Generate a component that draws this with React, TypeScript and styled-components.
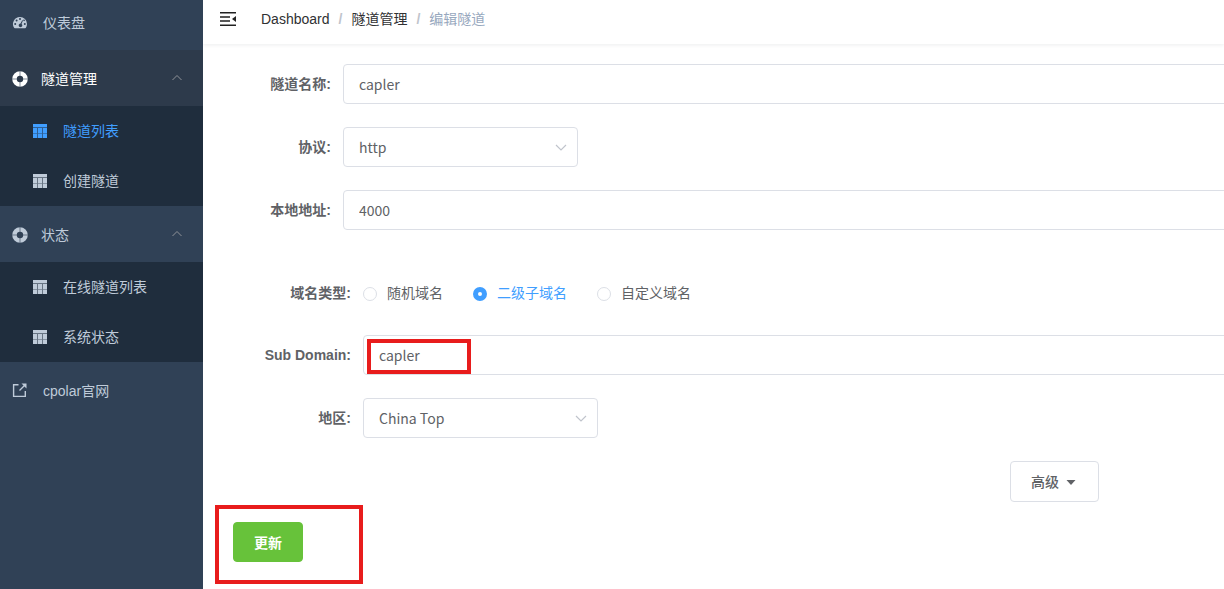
import React from "react";
import styled, { createGlobalStyle } from "styled-components";

const GlobalStyle = createGlobalStyle`
  *, *::before, *::after { box-sizing: border-box; }
  body {
    margin: 0;
    background: #fff;
    color: #606266;
    font: 14px/20px "Liberation Sans", "Noto Sans CJK SC", sans-serif;
  }
  a { color: inherit; text-decoration: none; }
`;

const fieldFont = `"Noto Sans CJK SC", sans-serif`;

const Shell = styled.div`
  display: flex;
  min-height: 100vh;
`;

const Sidebar = styled.nav`
  flex: 0 0 203px;
  background: #304156;
  color: #bfcbd9;
`;

const MenuLink = styled.a<{ $top?: boolean }>`
  display: flex;
  align-items: center;
  gap: 15px;
  height: ${(p) => (p.$top ? "50px" : "56px")};
  padding: ${(p) => (p.$top ? "0 20px 4px 12px" : "2px 20px 0 12px")};
`;

const GroupButton = styled.button<{ $active?: boolean }>`
  display: flex;
  align-items: center;
  gap: 13px;
  width: 100%;
  height: 56px;
  padding: 2px 20px 0 12px;
  border: 0;
  background: ${(p) => (p.$active ? "#2d3a4b" : "transparent")};
  color: ${(p) => (p.$active ? "#fff" : "#bfcbd9")};
  font: inherit;
  text-align: left;
`;

const GroupName = styled.span`
  flex: 1;
`;

const SubMenu = styled.div`
  background: #1f2d3d;
`;

const SubLink = styled.a<{ $active?: boolean }>`
  display: flex;
  align-items: center;
  gap: 16px;
  height: 50px;
  padding: 0 20px 0 33px;
  color: ${(p) => (p.$active ? "#409eff" : "#bfcbd9")};
`;

const Icon = styled.svg<{ $size?: number }>`
  display: block;
  flex: none;
  width: ${(p) => p.$size ?? 14}px;
  height: ${(p) => p.$size ?? 14}px;
`;

const Content = styled.div`
  flex: 1;
  min-width: 0;
  overflow: hidden;
`;

const TopBar = styled.header`
  display: flex;
  align-items: center;
  gap: 24px;
  height: 44px;
  padding: 0 16px 6px;
  box-shadow: 0 1px 4px rgba(0, 21, 41, 0.08);
`;

const IconButton = styled.button`
  padding: 0;
  border: 0;
  background: none;
  color: #222;
`;

const Crumbs = styled.nav`
  display: flex;
  gap: 9px;
  color: #303133;
`;

const Slash = styled.span`
  color: #c0c4cc;
  font-weight: 700;
`;

const Current = styled.span`
  color: #97a8be;
`;

const Form = styled.form`
  display: flex;
  flex-direction: column;
  padding: 20px 0 20px 30px;
`;

const Section = styled.div<{ $nested?: boolean }>`
  display: flex;
  flex-direction: column;
  gap: 23px;
  padding: ${(p) => (p.$nested ? "43px 0 0 20px" : "0")};
`;

const Row = styled.div`
  display: flex;
  align-items: center;
  min-height: 40px;
`;

const Label = styled.label`
  flex: 0 0 110px;
  padding-right: 12px;
  font-weight: 700;
  text-align: right;
  white-space: nowrap;
`;

const FieldWrap = styled.div<{ $narrow?: boolean }>`
  position: relative;
  ${(p) => (p.$narrow ? "flex: 0 0 235px;" : "flex: 1; margin-right: -8px;")}
`;

const Input = styled.input`
  display: block;
  width: 100%;
  height: 40px;
  padding: 0 15px;
  border: 1px solid #dcdfe6;
  border-radius: 4px;
  background: #fff;
  color: #606266;
  font: 14px ${fieldFont};
`;

const Select = styled.select`
  display: block;
  width: 100%;
  height: 40px;
  padding: 0 30px 0 15px;
  border: 1px solid #dcdfe6;
  border-radius: 4px;
  appearance: none;
  background: #fff;
  color: #606266;
  font: 14px ${fieldFont};
`;

const SelectArrow = styled(Icon)`
  position: absolute;
  top: 13px;
  right: 10px;
  color: #c0c4cc;
  pointer-events: none;
`;

const Highlight = styled.span`
  position: absolute;
  top: 4px;
  left: 4px;
  width: 104px;
  height: 35px;
  border: 4px solid #e81c1c;
  pointer-events: none;
`;

const RadioRow = styled(Row)`
  margin-bottom: -1px;
`;

const Radios = styled.div`
  display: flex;
  gap: 30px;
`;

const RadioLabel = styled.label`
  display: flex;
  align-items: center;
  gap: 10px;

  &:has(input:checked) { color: #409eff; }
`;

const Radio = styled.input`
  width: 14px;
  height: 14px;
  margin: 2px 0 0;
  border: 1px solid #dcdfe6;
  border-radius: 50%;
  appearance: none;
  background: #fff;

  &:checked { border: 5px solid #409eff; }
`;

const AdvancedRow = styled.div`
  display: flex;
  justify-content: flex-end;
  padding: 23px 125px 0 0;
`;

const Button = styled.button<{ $primary?: boolean }>`
  display: flex;
  align-items: center;
  gap: 5px;
  height: ${(p) => (p.$primary ? "40px" : "41px")};
  padding: 0 20px 1px;
  border: 1px solid ${(p) => (p.$primary ? "#67c23a" : "#dcdfe6")};
  border-radius: 4px;
  background: ${(p) => (p.$primary ? "#67c23a" : "#fff")};
  color: ${(p) => (p.$primary ? "#fff" : "#606266")};
  font: ${(p) => (p.$primary ? 700 : 500)} 14px ${fieldFont};
`;

const SubmitRow = styled.div`
  position: relative;
  display: flex;
  padding-top: 20px;
`;

const SubmitHighlight = styled.span`
  position: absolute;
  top: 3px;
  left: -18px;
  width: 148px;
  height: 79px;
  border: 4px solid #e81c1c;
  pointer-events: none;
`;

const GaugeIcon = () => (
  <Icon $size={16} viewBox="0 0 16 16" aria-hidden="true">
    <path
      fill="currentColor"
      fillRule="evenodd"
      d="M8 2a7 7 0 0 1 7 7c0 1.400-.4 2.700-1.100 3.800-.2.300-.4.400-.7.400H2.800c-.3 0-.5-.1-.7-.4A7 7 0 0 1 8 2ZM3.200 8a1 1 0 1 0 0 2 1 1 0 0 0 0-2Zm1.400-3.500a1 1 0 1 0 0 2 1 1 0 0 0 0-2ZM8 3.100a1 1 0 1 0 0 2 1 1 0 0 0 0-2Zm4.800 4.900a1 1 0 1 0 0 2 1 1 0 0 0 0-2Zm-2.600-2.700L8.500 8.600a1.800 1.800 0 1 0 1 .3l1.500-3.300-.8-.3Zm1.500-.7a.8.8 0 1 0 .8 1.400.8.8 0 0 0-.8-1.400Z"
    />
  </Icon>
);

const BuoyIcon = () => (
  <Icon $size={16} viewBox="0 0 16 16" fill="none" aria-hidden="true">
    <circle cx="8" cy="8" r="5.500" stroke="currentColor" strokeWidth="4.600" />
    <path d="M8 0v5M8 11v5M0 8h5M11 8h5" stroke="#304156" strokeWidth=".6" />
  </Icon>
);

const TableIcon = () => (
  <Icon viewBox="0 0 14 14" fill="currentColor" aria-hidden="true">
    <path d="M0 0h14v3H0z" />
    <path d="M0 3h14v1H0zM4 4h1v10H4zM9 4h1v10H9z" opacity=".45" />
    <path d="M0 9h4v1H0zM5 9h4v1H5zM10 9h4v1h-4z" opacity=".65" />
    <path d="M0 4h4v5H0zM5 4h4v5H5zM10 4h4v5h-4zM0 10h4v4H0zM5 10h4v4H5zM10 10h4v4h-4z" />
  </Icon>
);

const ExternalIcon = () => (
  <Icon $size={16} viewBox="0 0 16 16" fill="none" stroke="currentColor" strokeWidth="1.400" aria-hidden="true">
    <path d="M6.500 1.700H1.600v11.700h11.700V8M13.500 1.500 7.500 7.500" />
    <path d="M9.500.5h5v5z" fill="currentColor" stroke="none" />
  </Icon>
);

const FoldIcon = () => (
  <Icon $size={18} viewBox="0 0 18 18" aria-hidden="true">
    <path d="M1 2.800h16M1 7h10M1 11h10M1 15.200h16" stroke="currentColor" strokeWidth="1.600" />
    <path d="M17 6v6l-4-3z" fill="currentColor" />
  </Icon>
);

const ChevronUp = () => (
  <Icon $size={12} viewBox="0 0 12 12" fill="none" stroke="#909399" aria-hidden="true">
    <path d="M1.500 7 6 2.500 10.500 7" />
  </Icon>
);

const ChevronDown = () => (
  <SelectArrow viewBox="0 0 14 14" fill="none" stroke="currentColor" strokeWidth="1.200" aria-hidden="true">
    <path d="M2 5l5 5 5-5" />
  </SelectArrow>
);

const CaretDown = () => (
  <Icon viewBox="0 0 14 14" fill="currentColor" aria-hidden="true">
    <path d="M2.500 6h9L7 11z" />
  </Icon>
);

type MenuGroupProps = { name: string; active?: boolean; items: string[]; current?: string };

function MenuGroup({ name, active, items, current }: MenuGroupProps) {
  return (
    <>
      <GroupButton type="button" $active={active} aria-expanded="true">
        <BuoyIcon />
        <GroupName>{name}</GroupName>
        <ChevronUp />
      </GroupButton>
      <SubMenu>
        {items.map((item) => (
          <SubLink key={item} href="#" $active={item === current}>
            <TableIcon />
            {item}
          </SubLink>
        ))}
      </SubMenu>
    </>
  );
}

export default function App() {
  return (
    <>
      <GlobalStyle />
      <Shell>
        <Sidebar>
          <MenuLink href="#" $top>
            <GaugeIcon />
            仪表盘
          </MenuLink>
          <MenuGroup name="隧道管理" active items={["隧道列表", "创建隧道"]} current="隧道列表" />
          <MenuGroup name="状态" items={["在线隧道列表", "系统状态"]} />
          <MenuLink href="#">
            <ExternalIcon />
            cpolar官网
          </MenuLink>
        </Sidebar>
        <Content>
          <TopBar>
            <IconButton type="button" aria-label="折叠菜单">
              <FoldIcon />
            </IconButton>
            <Crumbs>
              <a href="#">Dashboard</a>
              <Slash>/</Slash>
              <a href="#">隧道管理</a>
              <Slash>/</Slash>
              <Current>编辑隧道</Current>
            </Crumbs>
          </TopBar>
          <Form onSubmit={(e) => e.preventDefault()}>
            <Section>
              <Row>
                <Label htmlFor="name">隧道名称:</Label>
                <FieldWrap>
                  <Input id="name" defaultValue="capler" />
                </FieldWrap>
              </Row>
              <Row>
                <Label htmlFor="protocol">协议:</Label>
                <FieldWrap $narrow>
                  <Select id="protocol" defaultValue="http">
                    <option>http</option>
                  </Select>
                  <ChevronDown />
                </FieldWrap>
              </Row>
              <Row>
                <Label htmlFor="address">本地地址:</Label>
                <FieldWrap>
                  <Input id="address" defaultValue="4000" />
                </FieldWrap>
              </Row>
            </Section>
            <Section $nested>
              <RadioRow role="radiogroup" aria-labelledby="domain-type">
                <Label as="span" id="domain-type">域名类型:</Label>
                <Radios>
                  <RadioLabel>
                    <Radio type="radio" name="domain" />
                    随机域名
                  </RadioLabel>
                  <RadioLabel>
                    <Radio type="radio" name="domain" defaultChecked />
                    二级子域名
                  </RadioLabel>
                  <RadioLabel>
                    <Radio type="radio" name="domain" />
                    自定义域名
                  </RadioLabel>
                </Radios>
              </RadioRow>
              <Row>
                <Label htmlFor="subdomain">Sub Domain:</Label>
                <FieldWrap>
                  <Input id="subdomain" defaultValue="capler" />
                  <Highlight />
                </FieldWrap>
              </Row>
              <Row>
                <Label htmlFor="region">地区:</Label>
                <FieldWrap $narrow>
                  <Select id="region" defaultValue="China Top">
                    <option>China Top</option>
                  </Select>
                  <ChevronDown />
                </FieldWrap>
              </Row>
            </Section>
            <AdvancedRow>
              <Button type="button">
                高级
                <CaretDown />
              </Button>
            </AdvancedRow>
            <SubmitRow>
              <Button type="submit" $primary>
                更新
              </Button>
              <SubmitHighlight />
            </SubmitRow>
          </Form>
        </Content>
      </Shell>
    </>
  );
}
